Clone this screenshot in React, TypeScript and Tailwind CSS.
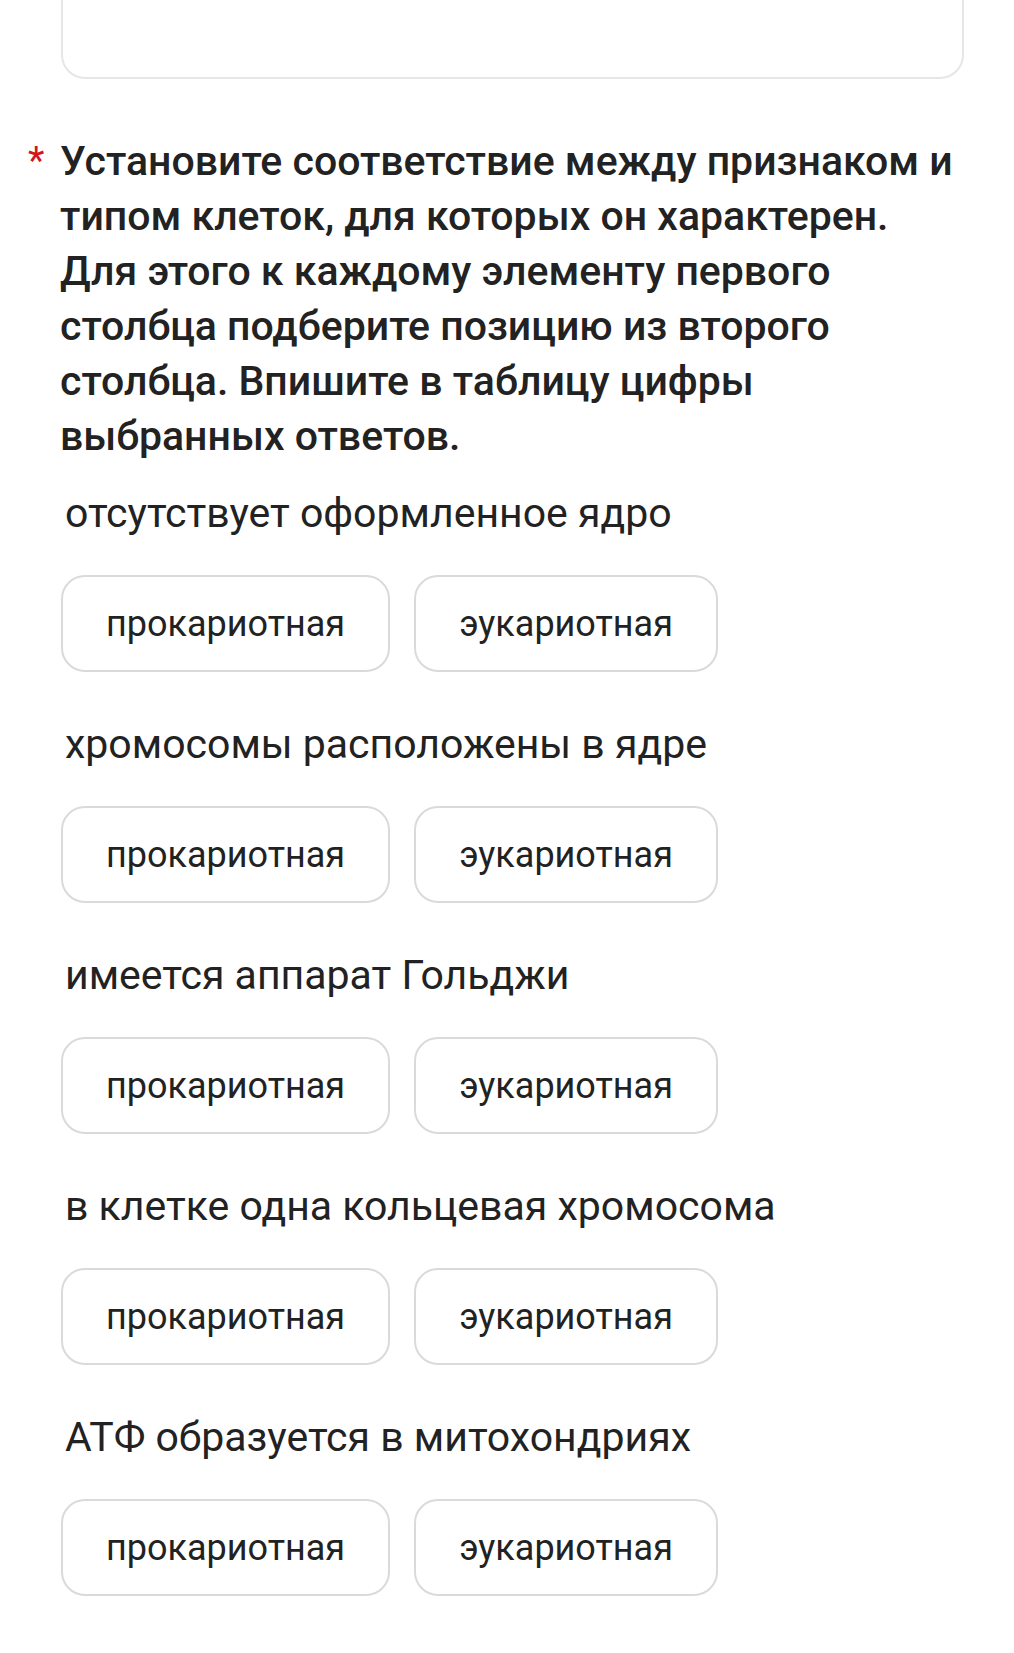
import React from 'react';

const items = [
  'отсутствует оформленное ядро',
  'хромосомы расположены в ядре',
  'имеется аппарат Гольджи',
  'в клетке одна кольцевая хромосома',
  'АТФ образуется в митохондриях',
];

const titleLines = [
  'Установите соответствие между признаком и',
  'типом клеток, для которых он характерен.',
  'Для этого к каждому элементу первого',
  'столбца подберите позицию из второго',
  'столбца. Впишите в таблицу цифры',
  'выбранных ответов.',
];

function Choice({ label }: { label: string }) {
  return (
    <button
      type="button"
      className="h-[97px] rounded-[24px] border-2 border-[#dadada] bg-white px-[43px] text-[36px] leading-none text-[#222] whitespace-nowrap"
    >
      {label}
    </button>
  );
}

export default function App() {
  return (
    <div className="min-h-screen bg-white font-['Roboto',sans-serif] text-[#222]">
      <div className="pl-[61px] pr-[50px]">
        <div className="h-[79px] rounded-b-[24px] border-2 border-t-0 border-[#e6e6e6]" />
      </div>

      <div className="mt-[55px] flex pl-[28px]">
        <span className="w-[32px] shrink-0 text-[38px] leading-[55px] text-[#d3141a]">*</span>
        <h2 className="text-[41px] font-medium leading-[55px] whitespace-nowrap">
          {titleLines.map((line) => (
            <span key={line} className="block">
              {line}
            </span>
          ))}
        </h2>
      </div>

      <div className="mt-[23px] pl-[61px]">
        {items.map((item) => (
          <div key={item} className="mb-[46px]">
            <p className="pl-[4px] text-[41px] leading-[52px]">{item}</p>
            <div className="mt-[36px] flex gap-[24px]">
              <Choice label="прокариотная" />
              <Choice label="эукариотная" />
            </div>
          </div>
        ))}
      </div>
    </div>
  );
}
